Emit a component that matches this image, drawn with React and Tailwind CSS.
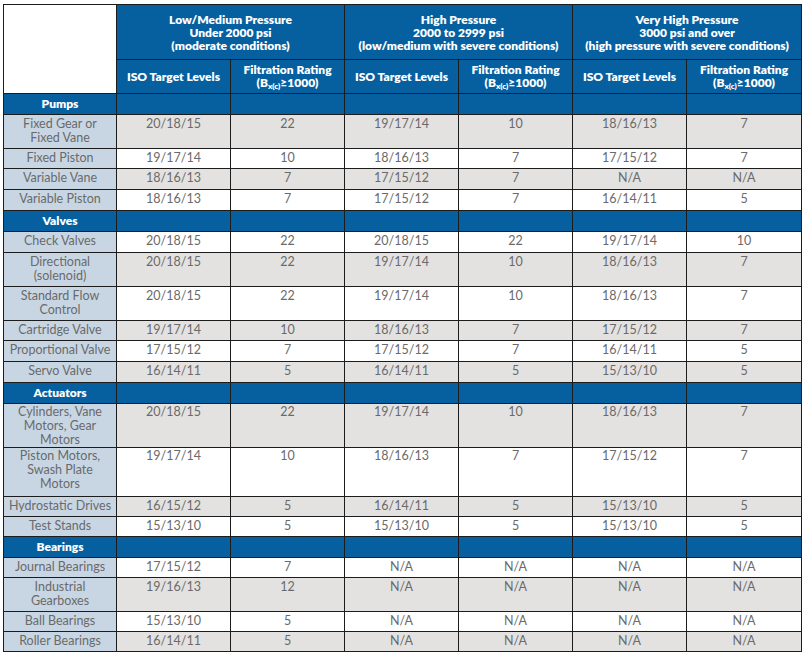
import React from 'react';

const groups = [
  {
    name: 'Pumps',
    rows: [
      { label: ['Fixed Gear or', 'Fixed Vane'], vals: ['20/18/15', '22', '19/17/14', '10', '18/16/13', '7'], gray: true, h: 'h-[34px]' },
      { label: ['Fixed Piston'], vals: ['19/17/14', '10', '18/16/13', '7', '17/15/12', '7'], gray: false, h: 'h-[20px]' },
      { label: ['Variable Vane'], vals: ['18/16/13', '7', '17/15/12', '7', 'N/A', 'N/A'], gray: true, h: 'h-[21px]' },
      { label: ['Variable Piston'], vals: ['18/16/13', '7', '17/15/12', '7', '16/14/11', '5'], gray: false, h: 'h-[21px]' },
    ],
  },
  {
    name: 'Valves',
    rows: [
      { label: ['Check Valves'], vals: ['20/18/15', '22', '20/18/15', '22', '19/17/14', '10'], gray: false, h: 'h-[21px]' },
      { label: ['Directional', '(solenoid)'], vals: ['20/18/15', '22', '19/17/14', '10', '18/16/13', '7'], gray: true, h: 'h-[34px]' },
      { label: ['Standard Flow', 'Control'], vals: ['20/18/15', '22', '19/17/14', '10', '18/16/13', '7'], gray: false, h: 'h-[34px]' },
      { label: ['Cartridge Valve'], vals: ['19/17/14', '10', '18/16/13', '7', '17/15/12', '7'], gray: true, h: 'h-[20px]' },
      { label: ['Proportional Valve'], vals: ['17/15/12', '7', '17/15/12', '7', '16/14/11', '5'], gray: false, h: 'h-[21px]' },
      { label: ['Servo Valve'], vals: ['16/14/11', '5', '16/14/11', '5', '15/13/10', '5'], gray: true, h: 'h-[21px]' },
    ],
  },
  {
    name: 'Actuators',
    rows: [
      { label: ['Cylinders, Vane', 'Motors, Gear', 'Motors'], vals: ['20/18/15', '22', '19/17/14', '10', '18/16/13', '7'], gray: true, h: 'h-[44px]', tight: true },
      { label: ['Piston Motors,', 'Swash Plate', 'Motors'], vals: ['19/17/14', '10', '18/16/13', '7', '17/15/12', '7'], gray: false, h: 'h-[49px]', tight: true },
      { label: ['Hydrostatic Drives'], vals: ['16/15/12', '5', '16/14/11', '5', '15/13/10', '5'], gray: true, h: 'h-[20px]' },
      { label: ['Test Stands'], vals: ['15/13/10', '5', '15/13/10', '5', '15/13/10', '5'], gray: false, h: 'h-[20px]' },
    ],
  },
  {
    name: 'Bearings',
    rows: [
      { label: ['Journal Bearings'], vals: ['17/15/12', '7', 'N/A', 'N/A', 'N/A', 'N/A'], gray: false, h: 'h-[20px]' },
      { label: ['Industrial', 'Gearboxes'], vals: ['19/16/13', '12', 'N/A', 'N/A', 'N/A', 'N/A'], gray: true, h: 'h-[34px]' },
      { label: ['Ball Bearings'], vals: ['15/13/10', '5', 'N/A', 'N/A', 'N/A', 'N/A'], gray: false, h: 'h-[20px]' },
      { label: ['Roller Bearings'], vals: ['16/14/11', '5', 'N/A', 'N/A', 'N/A', 'N/A'], gray: true, h: 'h-[20px]' },
    ],
  },
];

const pressures = [
  ['Low/Medium Pressure', 'Under 2000 psi', '(moderate conditions)'],
  ['High Pressure', '2000 to 2999 psi', '(low/medium with severe conditions)'],
  ['Very High Pressure', '3000 psi and over', '(high pressure with severe conditions)'],
];

const cell = 'border border-[#1c1c1c] p-0';
const head = `${cell} bg-[#0660a0] text-white font-extrabold text-[12px] align-middle`;
const body = 'text-[#6a6a6a] text-[12.5px] leading-[14px] text-center align-top';

const FiltrationHead = () => (
  <th className={`${head} leading-[12px]`}>
    <div>Filtration Rating</div>
    <div className="mt-[1px]">
      (B<span className="text-[8px] leading-none align-[-2px]">x(c)</span>≥1000)
    </div>
  </th>
);

const IsoHead = () => <th className={`${head} leading-[12px]`}>ISO Target Levels</th>;

export default function App() {
  return (
    <div className="bg-white w-[807px] h-[659px] pt-[4px] pl-[3px] font-['Lato','Liberation_Sans',sans-serif]">
      <table className="table-fixed border-collapse w-[799px]">
        <colgroup>
          <col className="w-[113px]" />
          <col className="w-[114px]" />
          <col className="w-[114px]" />
          <col className="w-[114px]" />
          <col className="w-[114px]" />
          <col className="w-[114px]" />
          <col className="w-[115px]" />
        </colgroup>
        <thead>
          <tr className="h-[55px]">
            <th rowSpan={2} className={`${cell} bg-white`}></th>
            {pressures.map((p, i) => (
              <th key={i} colSpan={2} className={`${head} leading-[13px]`}>
                {p.map((line, j) => (
                  <div key={j}>{line}</div>
                ))}
              </th>
            ))}
          </tr>
          <tr className="h-[34px]">
            <IsoHead />
            <FiltrationHead />
            <IsoHead />
            <FiltrationHead />
            <IsoHead />
            <FiltrationHead />
          </tr>
        </thead>
        <tbody>
          {groups.map((g) => (
            <React.Fragment key={g.name}>
              <tr className="h-[21px]">
                <td className={`${head} text-center`}>{g.name}</td>
                {[0, 1, 2, 3, 4, 5].map((k) => (
                  <td key={k} className={`${cell} bg-[#0660a0]`}></td>
                ))}
              </tr>
              {g.rows.map((r, i) => (
                <tr key={i} className={r.h}>
                  <td className={`${cell} bg-[#c8d6e4] ${body} ${r.tight ? 'pt-[1px]' : 'pt-[2px]'}`}>
                    {r.label.map((l, j) => (
                      <div key={j}>{l}</div>
                    ))}
                  </td>
                  {r.vals.map((v, j) => (
                    <td
                      key={j}
                      className={`${cell} ${r.gray ? 'bg-[#e3e2e0]' : 'bg-white'} ${body} ${r.tight ? 'pt-[1px]' : 'pt-[2px]'}`}
                    >
                      {v}
                    </td>
                  ))}
                </tr>
              ))}
            </React.Fragment>
          ))}
        </tbody>
      </table>
    </div>
  );
}
